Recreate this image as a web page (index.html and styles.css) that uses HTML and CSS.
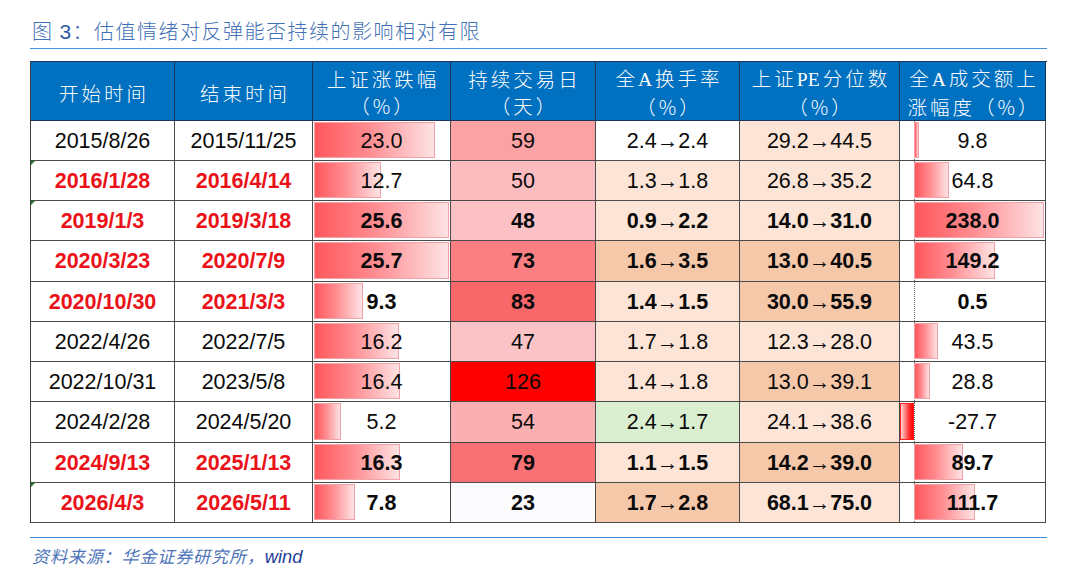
FILE: index.html
```
<!DOCTYPE html>
<html lang="zh-CN">
<head>
<meta charset="utf-8">
<title>估值情绪对反弹能否持续的影响相对有限</title>
<link rel="stylesheet" href="styles.css">
</head>
<body>
<div class="page">
  <div class="title">图 <span class="num">3</span>：估值情绪对反弹能否持续的影响相对有限</div>
  <div class="tbl">
    <div class="c h"><span>开始时间</span></div>
    <div class="c h"><span>结束时间</span></div>
    <div class="c h"><span>上证涨跌幅</span><span>（%）</span></div>
    <div class="c h"><span>持续交易日</span><span>（天）</span></div>
    <div class="c h"><span>全<span class="lat">A</span>换手率</span><span>（%）</span></div>
    <div class="c h"><span>上证<span class="lat">PE</span>分位数</span><span>（%）</span></div>
    <div class="c h"><span>全<span class="lat">A</span>成交额上</span><span>涨幅度（%）</span></div>

    <div class="c">2015/8/26</div>
    <div class="c">2015/11/25</div>
    <div class="c bc"><i class="bar" style="width:121px"></i><span class="v">23.0</span></div>
    <div class="c" style="background:#fba2a5">59</div>
    <div class="c">2.4→2.4</div>
    <div class="c lp">29.2→44.5</div>
    <div class="c dc"><i class="axis"></i><i class="pos" style="width:5px"></i><span class="v">9.8</span></div>

    <div class="c rd mark">2016/1/28</div>
    <div class="c rd">2016/4/14</div>
    <div class="c bc"><i class="bar" style="width:67px"></i><span class="v">12.7</span></div>
    <div class="c" style="background:#fbbcbf">50</div>
    <div class="c lp">1.3→1.8</div>
    <div class="c lp">26.8→35.2</div>
    <div class="c dc"><i class="axis"></i><i class="pos" style="width:35px"></i><span class="v">64.8</span></div>

    <div class="c rd mark">2019/1/3</div>
    <div class="c rd">2019/3/18</div>
    <div class="c bc b"><i class="bar" style="width:135px"></i><span class="v">25.6</span></div>
    <div class="c b" style="background:#fbc1c4">48</div>
    <div class="c lp b">0.9→2.2</div>
    <div class="c lp b">14.0→31.0</div>
    <div class="c dc b"><i class="axis"></i><i class="pos" style="width:130px"></i><span class="v">238.0</span></div>

    <div class="c rd">2020/3/23</div>
    <div class="c rd">2020/7/9</div>
    <div class="c bc b"><i class="bar" style="width:135px"></i><span class="v">25.7</span></div>
    <div class="c b" style="background:#f97f82">73</div>
    <div class="c dp b">1.6→3.5</div>
    <div class="c dp b">13.0→40.5</div>
    <div class="c dc b"><i class="axis"></i><i class="pos" style="width:81px"></i><span class="v">149.2</span></div>

    <div class="c rd">2020/10/30</div>
    <div class="c rd">2021/3/3</div>
    <div class="c bc b"><i class="bar" style="width:49px"></i><span class="v">9.3</span></div>
    <div class="c b" style="background:#f8686b">83</div>
    <div class="c lp b">1.4→1.5</div>
    <div class="c dp b">30.0→55.9</div>
    <div class="c dc b"><i class="axis"></i><span class="v">0.5</span></div>

    <div class="c">2022/4/26</div>
    <div class="c">2022/7/5</div>
    <div class="c bc"><i class="bar" style="width:85px"></i><span class="v">16.2</span></div>
    <div class="c" style="background:#fbc3c6">47</div>
    <div class="c lp">1.7→1.8</div>
    <div class="c lp">12.3→28.0</div>
    <div class="c dc"><i class="axis"></i><i class="pos" style="width:24px"></i><span class="v">43.5</span></div>

    <div class="c">2022/10/31</div>
    <div class="c">2023/5/8</div>
    <div class="c bc"><i class="bar" style="width:86px"></i><span class="v">16.4</span></div>
    <div class="c" style="background:#ff0000">126</div>
    <div class="c lp">1.4→1.8</div>
    <div class="c dp">13.0→39.1</div>
    <div class="c dc"><i class="axis"></i><i class="pos" style="width:16px"></i><span class="v">28.8</span></div>

    <div class="c">2024/2/28</div>
    <div class="c">2024/5/20</div>
    <div class="c bc"><i class="bar" style="width:27px"></i><span class="v">5.2</span></div>
    <div class="c" style="background:#fab0b3">54</div>
    <div class="c gr">2.4→1.7</div>
    <div class="c lp">24.1→38.6</div>
    <div class="c dc"><i class="neg" style="width:14px"></i><i class="axis"></i><span class="v">-27.7</span></div>

    <div class="c rd">2024/9/13</div>
    <div class="c rd">2025/1/13</div>
    <div class="c bc b"><i class="bar" style="width:86px"></i><span class="v">16.3</span></div>
    <div class="c b" style="background:#f87174">79</div>
    <div class="c lp b">1.1→1.5</div>
    <div class="c dp b">14.2→39.0</div>
    <div class="c dc b"><i class="axis"></i><i class="pos" style="width:49px"></i><span class="v">89.7</span></div>

    <div class="c rd mark">2026/4/3</div>
    <div class="c rd">2026/5/11</div>
    <div class="c bc b"><i class="bar" style="width:41px"></i><span class="v">7.8</span></div>
    <div class="c b" style="background:#fcfcff">23</div>
    <div class="c dp b">1.7→2.8</div>
    <div class="c lp b">68.1→75.0</div>
    <div class="c dc b"><i class="axis"></i><i class="pos" style="width:61px"></i><span class="v">111.7</span></div>
  </div>
  <div class="source"><span class="cn">资料来源：华金证券研究所，</span><span class="en">wind</span></div>
</div>
</body>
</html>
```
FILE: styles.css
```
html, body {
  margin: 0;
  padding: 0;
  background: #ffffff;
}

.page {
  width: 1017px;
  padding-left: 30px;
}

.title {
  padding-top: 18px;
  padding-bottom: 3px;
  padding-left: 2px;
  line-height: 26px;
  font-family: "Noto Sans CJK SC", sans-serif;
  font-size: 20px;
  font-weight: 300;
  letter-spacing: 1.5px;
  color: #4170b6;
  border-bottom: 1.5px solid #4592d8;
  margin-bottom: 11.5px;
}

.title .num {
  font-family: "Liberation Sans", sans-serif;
  font-size: 21px;
  color: #2d5aa6;
}

.tbl {
  display: grid;
  width: 1016px;
  grid-template-columns: 144px 138px 138px 145px 144px 160px 146px;
  grid-template-rows: 59px repeat(10, 40.25px);
  border-left: 1px solid #3e3e3e;
  border-top: 1px solid #1b355c;
}

.c {
  box-sizing: border-box;
  border-right: 1px solid #4a4a4a;
  border-bottom: 1px solid #4a4a4a;
  display: grid;
  align-items: center;
  justify-items: center;
  padding-top: 2px;
  font-family: "Liberation Sans", Arial, sans-serif;
  font-size: 21.5px;
  color: #0a0a0a;
  white-space: nowrap;
  position: relative;
}

.h {
  background: #0070c0;
  color: #ffffff;
  border-right-color: #1b355c;
  border-bottom-color: #1b355c;
  font-family: "Noto Sans CJK SC", sans-serif;
  font-weight: 300;
  font-size: 19.5px;
  letter-spacing: 3px;
  line-height: 27px;
  padding: 3px 0 0 3px;
  display: flex;
  flex-direction: column;
  align-items: center;
  justify-content: center;
}

.h .lat {
  font-family: "Liberation Serif", serif;
  font-weight: normal;
  letter-spacing: 0;
  margin-right: 3px;
}

.b {
  font-weight: bold;
}

.rd {
  color: #ea1218;
  font-weight: bold;
}

.mark::before {
  content: "";
  position: absolute;
  left: 0;
  top: 0;
  border-top: 4px solid #1f7a33;
  border-right: 4px solid transparent;
}

.lp {
  background: #fce4d6;
}

.dp {
  background: #f6c8aa;
}

.gr {
  background: #d9efd0;
}

.bc {
  grid-template-columns: 1fr;
  padding-top: 0;
}

.bar {
  grid-area: 1 / 1;
  justify-self: start;
  align-self: stretch;
  box-sizing: border-box;
  margin: 1px 0 2px 1px;
  border: 1px solid #f2a2a6;
  background: linear-gradient(90deg, #ff575c 0%, #ff8c90 45%, #fde3e4 100%);
}

.v {
  grid-row: 1;
  grid-column: 1 / -1;
  justify-self: center;
  padding-top: 2px;
}

.dc {
  grid-template-columns: 14px 1fr;
  padding-top: 0;
}

.axis {
  grid-row: 1;
  grid-column: 2;
  justify-self: start;
  align-self: stretch;
  border-left: 1px dotted #6a6a6a;
}

.pos {
  grid-row: 1;
  grid-column: 2;
  justify-self: start;
  align-self: stretch;
  box-sizing: border-box;
  margin: 1px 0 2px;
  border: 1px solid #f2a2a6;
  background: linear-gradient(90deg, #ff575c 0%, #ff8c90 45%, #fde3e4 100%);
}

.neg {
  grid-row: 1;
  grid-column: 1;
  justify-self: end;
  align-self: stretch;
  box-sizing: border-box;
  margin: 1px 0 2px;
  border: 1px solid #ff2020;
  background: linear-gradient(90deg, #ffd6d7 0%, #ff2a2a 70%, #ff0000 100%);
}

.source {
  margin-top: 14px;
  border-top: 1.5px solid #3f8fd8;
  padding: 6px 0 0 2px;
  line-height: 24px;
  font-style: italic;
}

.source .cn {
  font-family: "Noto Sans CJK SC", sans-serif;
  font-size: 17px;
  letter-spacing: 0.9px;
  color: #4d74b8;
}

.source .en {
  font-family: "Liberation Sans", Arial, sans-serif;
  font-size: 18.3px;
  color: #1f3f98;
}
```
